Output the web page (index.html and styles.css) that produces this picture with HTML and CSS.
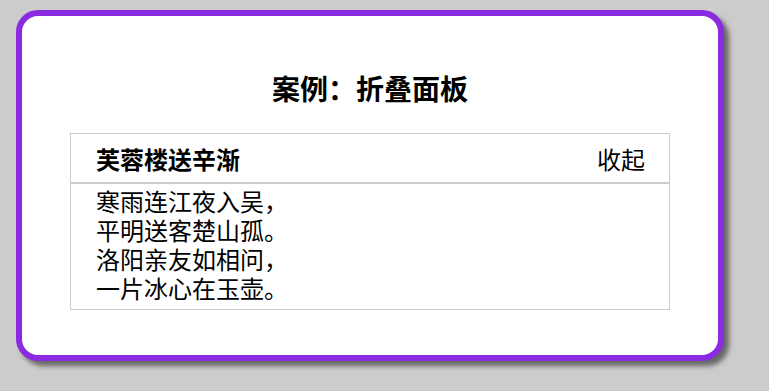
FILE: index.html
```html
<!DOCTYPE html>
<html lang="zh-CN">
<head>
  <meta charset="UTF-8" />
  <title>案例：折叠面板</title>
  <meta name="viewport" content="width=device-width, initial-scale=1.0" />
  <link rel="stylesheet" href="styles.css">
</head>
<body>

<div class="card">
  <h2 class="title">案例：折叠面板</h2>

  <!-- 折叠面板 -->
  <div class="panel">
    <div class="panel-head">
      <span class="panel-name">芙蓉楼送辛渐</span>
      <span class="toggle" id="toggleBtn">收起</span>
    </div>
    <div class="panel-body" id="panelBody">
      <p>寒雨连江夜入吴，</p>
      <p>平明送客楚山孤。</p>
      <p>洛阳亲友如相问，</p>
      <p>一片冰心在玉壶。</p>
    </div>
  </div>
</div>

<script src="script.js"></script>
</body>
</html>
```

FILE: styles.css
```css
body {
  margin: 0;
  padding: 10px 16px;
  background-color: #ccc;
  font-family: "Noto Sans CJK SC", "Liberation Sans", sans-serif;
  color: #000;
}

/* 外层卡片 */
.card {
  width: 696px;
  padding: 52px 0 45px;
  background-color: #fff;
  border: 6px solid blueviolet;
  border-radius: 22px;
  box-shadow: 5px 5px 5px #666;
}

.title {
  margin: 0 0 25px;
  font-size: 28px;
  line-height: 40px;
  text-align: center;
}

/* 面板 */
.panel {
  width: 598px;
  margin: 0 auto;
  border: 1px solid #ccc;
}

.panel-head {
  display: flex;
  justify-content: space-between;
  align-items: center;
  height: 48px;
  padding: 0 24px 0 25px;
  border-bottom: 2px solid #ccc;
  font-size: 24px;
}

.panel-name {
  font-weight: bold;
}

.toggle {
  cursor: pointer;
}

.panel-body {
  padding: 2px 25px 7px;
  font-size: 24px;
  line-height: 29px;
}

.panel-body p {
  margin: 0;
}

.panel-body.hidden {
  display: none;
}
```

FILE: script.js
```js
// 点击“收起 / 展开”切换面板内容
const toggleBtn = document.getElementById('toggleBtn');
const panelBody = document.getElementById('panelBody');

toggleBtn.addEventListener('click', () => {
  panelBody.classList.toggle('hidden');
  toggleBtn.textContent = panelBody.classList.contains('hidden') ? '展开' : '收起';
});
```
